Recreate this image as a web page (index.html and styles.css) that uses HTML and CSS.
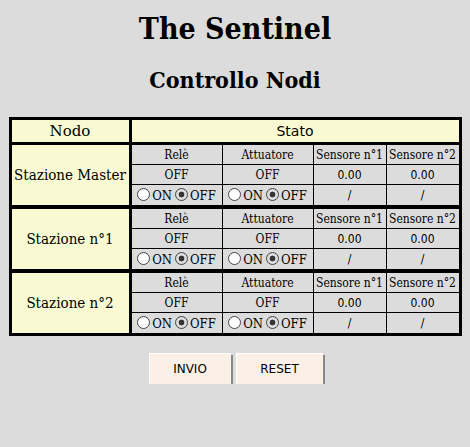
FILE: index.html
```html
<!DOCTYPE html>
<html>
<head>
<meta charset="utf-8">
<title>The Sentinel</title>
<link rel="stylesheet" href="styles.css">
</head>
<body>
<h1 class="title">The Sentinel</h1>
<h2 class="subtitle">Controllo Nodi</h2>
<form class="panel">
<table class="main">
  <tr>
    <th class="node-head">Nodo</th>
    <th class="state-head">Stato</th>
  </tr>
  <tr>
    <td class="node">Stazione Master</td>
    <td class="state">
      <table class="inner">
        <tr class="r-head"><td class="c-rele">Relè</td><td class="c-att">Attuatore</td><td>Sensore n°1</td><td>Sensore n°2</td></tr>
        <tr class="r-val"><td>OFF</td><td>OFF</td><td class="num">0.00</td><td class="num">0.00</td></tr>
        <tr class="r-ctl">
          <td><label><input type="radio" name="r0" class="radio">ON</label><label><input type="radio" name="r0" class="radio" checked>OFF</label></td>
          <td><label><input type="radio" name="a0" class="radio">ON</label><label><input type="radio" name="a0" class="radio" checked>OFF</label></td>
          <td class="num">/</td><td class="num">/</td>
        </tr>
      </table>
    </td>
  </tr>
  <tr>
    <td class="node">Stazione n°1</td>
    <td class="state">
      <table class="inner">
        <tr class="r-head"><td class="c-rele">Relè</td><td class="c-att">Attuatore</td><td>Sensore n°1</td><td>Sensore n°2</td></tr>
        <tr class="r-val"><td>OFF</td><td>OFF</td><td class="num">0.00</td><td class="num">0.00</td></tr>
        <tr class="r-ctl">
          <td><label><input type="radio" name="r1" class="radio">ON</label><label><input type="radio" name="r1" class="radio" checked>OFF</label></td>
          <td><label><input type="radio" name="a1" class="radio">ON</label><label><input type="radio" name="a1" class="radio" checked>OFF</label></td>
          <td class="num">/</td><td class="num">/</td>
        </tr>
      </table>
    </td>
  </tr>
  <tr>
    <td class="node">Stazione n°2</td>
    <td class="state">
      <table class="inner">
        <tr class="r-head"><td class="c-rele">Relè</td><td class="c-att">Attuatore</td><td>Sensore n°1</td><td>Sensore n°2</td></tr>
        <tr class="r-val"><td>OFF</td><td>OFF</td><td class="num">0.00</td><td class="num">0.00</td></tr>
        <tr class="r-ctl">
          <td><label><input type="radio" name="r2" class="radio">ON</label><label><input type="radio" name="r2" class="radio" checked>OFF</label></td>
          <td><label><input type="radio" name="a2" class="radio">ON</label><label><input type="radio" name="a2" class="radio" checked>OFF</label></td>
          <td class="num">/</td><td class="num">/</td>
        </tr>
      </table>
    </td>
  </tr>
</table>
<div class="actions">
  <button type="button" class="btn btn-send">INVIO</button>
  <button type="reset" class="btn btn-reset">RESET</button>
</div>
</form>
</body>
</html>
```

FILE: styles.css
```css
html, body {
  margin: 0;
  padding: 0;
  background: #dcdcdc;
  color: #000;
  font-family: "DejaVu Serif", serif;
}
body {
  padding-top: 12px;
}
.title {
  margin: 0;
  text-align: center;
  font-family: "DejaVu Serif", serif;
  font-stretch: condensed;
  font-weight: bold;
  font-size: 30px;
  line-height: 34px;
}
.subtitle {
  margin: 20px 0 0 0;
  text-align: center;
  font-family: "DejaVu Serif", serif;
  font-stretch: condensed;
  font-weight: bold;
  font-size: 23px;
  line-height: 28px;
}
.panel {
  margin: 23px 0 0 0;
}
.main {
  margin: 0 auto;
  width: 453px;
  border-collapse: collapse;
  border: 3px solid #000;
}
.main > tbody > tr > th,
.main > tbody > tr > td {
  border: 3px solid #000;
  padding: 0;
}
.main > tbody > tr + tr + tr > td {
  border-top-width: 4px;
}
.node-head, .state-head {
  background: #fafad2;
  font-weight: normal;
  font-size: 15px;
  height: 22px;
  line-height: 22px;
  text-align: center;
}
.state-head {
  font-family: "DejaVu Sans", sans-serif;
  font-size: 14px;
}
.node-head {
  width: 117px;
}
.node {
  background: #fafad2;
  text-align: center;
  font-size: 15px;
  font-stretch: semi-condensed;
  white-space: nowrap;
}
.state {
  background: #dcdcdc;
}
.inner {
  width: 100%;
  border-collapse: collapse;
  border-style: hidden;
}
.inner td {
  border: 1px solid #000;
  padding: 0 1px;
  text-align: center;
  font-size: 12px;
  white-space: nowrap;
  font-stretch: semi-condensed;
}
.r-head td { height: 19px; }
.r-val td { height: 19px; }
.r-ctl td { height: 20px; padding: 0; }
.c-rele, .c-att { width: 88px; }
.num {
  font-family: "DejaVu Sans", sans-serif;
}
.r-ctl label {
  display: inline-flex;
  align-items: center;
  font-size: 13px;
  vertical-align: middle;
}
.r-ctl label + label {
  margin-left: 3px;
}
.radio {
  -webkit-appearance: none;
  appearance: none;
  width: 13px;
  height: 13px;
  margin: 0 2px 2px 0;
  border: 1px solid #444;
  border-radius: 50%;
  background: #fff;
  box-sizing: border-box;
}
.radio:checked {
  background: radial-gradient(circle, #333 0 2.6px, #dcdcdc 3.2px);
}
.actions {
  display: flex;
  justify-content: center;
  gap: 5px;
  margin-top: 17px;
  padding-left: 2px;
}
.btn {
  background: #faf0e6;
  border: none;
  box-shadow: 1px 1px 0 #fff inset, 2px 2px 0 #888;
  font-family: "DejaVu Sans", sans-serif;
  font-size: 12px;
  color: #000;
  height: 31px;
  padding: 0;
}
.btn-send { width: 82px; }
.btn-reset { width: 87px; }
```
